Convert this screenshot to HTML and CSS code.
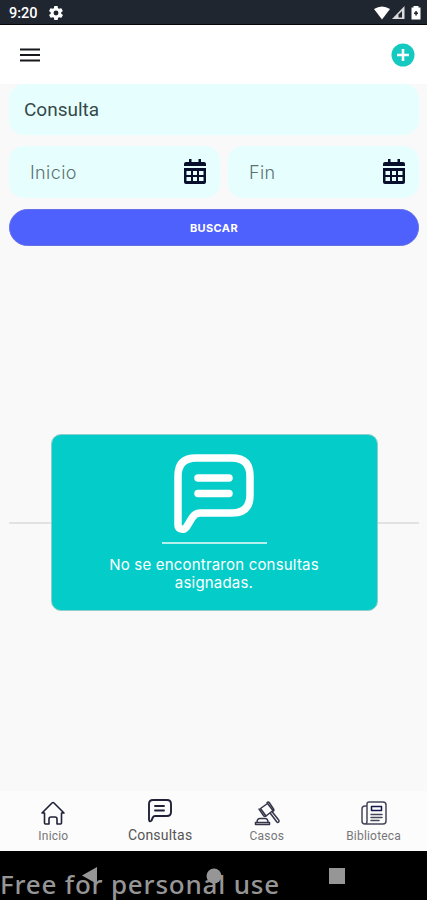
FILE: index.html
```html
<!DOCTYPE html>
<html lang="es">
<head>
  <meta charset="utf-8">
  <title>Consultas</title>
  <link rel="stylesheet" href="styles.css">
</head>
<body>

  <div class="status-bar">
    <span class="clock">9:20</span>
    <svg class="gear" width="14" height="14" viewBox="2 2 20 20"><path fill="#fff" d="M19.4 13c0-.3.1-.6.1-1s0-.7-.1-1l2.100-1.600c.2-.2.2-.4.1-.6l-2-3.500c-.1-.2-.4-.3-.6-.2l-2.500 1c-.5-.4-1.100-.7-1.700-1l-.4-2.600c0-.3-.2-.5-.5-.5h-4c-.2 0-.5.2-.5.4l-.4 2.700c-.6.2-1.100.6-1.700 1l-2.500-1c-.2-.1-.5 0-.6.2l-2 3.500c-.1.2-.1.5.1.6L4.500 11c0 .3-.1.600-.1 1s0 .7.100 1l-2.100 1.600c-.2.200-.2.400-.1.600l2 3.500c.1.200.4.300.6.200l2.500-1c.5.400 1.100.7 1.700 1l.4 2.600c0 .3.200.500.5.500h4c.2 0 .5-.2.5-.4l.4-2.700c.6-.2 1.100-.6 1.700-1l2.500 1c.2.100.5 0 .6-.2l2-3.500c.1-.2.1-.5-.1-.6zM12 15.500a3.500 3.500 0 1 1 0-7 3.500 3.500 0 0 1 0 7z"/></svg>
    <svg class="signals" width="50" height="16" viewBox="0 0 50 16">
      <path d="M1 4Q9 -1 17 4L9 14.500z" fill="#fff"/>
      <path d="M19 14L31.500 1V14z" fill="#d9dbdd"/>
      <path d="M25.500 12.500V9.500L29 6v6.500z" fill="#202630"/>
      <path d="M40.500 1h5v1.500h2V14.500h-9V2.500h2z" fill="#fff"/>
      <path d="M42.300 6h1.500v1.500h1.200V9h-1.200v1.500h-1.500V9h-1.300V7.500h1.300z" fill="#202630"/>
    </svg>
  </div>

  <div class="header">
    <svg width="20" height="14" viewBox="0 0 20 14"><path d="M0 1.500h20M0 7h20M0 12.500h20" stroke="#16181c" stroke-width="1.800"/></svg>
    <svg width="24" height="24" viewBox="0 0 24 24"><circle cx="12" cy="12" r="11.500" fill="#13c9c0"/><path d="M12 6v12M6 12h12" stroke="#fff" stroke-width="2.600"/></svg>
  </div>

  <div class="content">
    <div class="field query">Consulta</div>
    <div class="dates">
      <div class="field date">
        <span>Inicio</span>
        <svg width="22" height="25" viewBox="0 0 22 25"><path fill="#080e2c" d="M5 0h2.500v3h7V0H17v3h3q2 0 2 2v2H0V5q0-2 2-2h3zM0 9h22v14q0 2-2 2H2q-2 0-2-2z"/><path fill="#e6fffe" d="M2.500 12h4.500v4H2.500zM9 12h4v4H9zM15 12h4.500v4h-4.500zM2.500 18h4.500v4H2.500zM9 18h4v4H9zM15 18h4.500v4h-4.500z"/></svg>
      </div>
      <div class="field date">
        <span>Fin</span>
        <svg width="22" height="25" viewBox="0 0 22 25"><path fill="#080e2c" d="M5 0h2.500v3h7V0H17v3h3q2 0 2 2v2H0V5q0-2 2-2h3zM0 9h22v14q0 2-2 2H2q-2 0-2-2z"/><path fill="#e6fffe" d="M2.500 12h4.500v4H2.500zM9 12h4v4H9zM15 12h4.500v4h-4.500zM2.500 18h4.500v4H2.500zM9 18h4v4H9zM15 18h4.500v4h-4.500z"/></svg>
      </div>
    </div>
    <button class="search-btn">BUSCAR</button>

    <div class="results">
      <div class="side-line"></div>
      <div class="empty-card">
        <svg width="80" height="80" viewBox="0 0 80 80" fill="none" stroke="#fff" stroke-width="7.500" stroke-linecap="round" stroke-linejoin="round">
          <path d="M4 22Q4 4 22 4H58Q76 4 76 22V41Q76 59 58 59H26Q21 59 18 64L12.500 73Q10 76 7 75Q4 74 4 71Z"/>
          <path d="M24 24H55M24 39.500H55"/>
        </svg>
        <div class="divider"></div>
        <p>No se encontraron consultas<br>asignadas.</p>
      </div>
      <div class="side-line"></div>
    </div>
  </div>

  <div class="tabs">
    <div class="tab">
      <svg width="26" height="26" viewBox="0 0 26 26" fill="none" stroke="#202138" stroke-width="1.600" stroke-linejoin="round" stroke-linecap="round"><path d="M2 13L12 3q1-1 2 0l10 10H21.500V23q0 1-1 1H17V19q0-2-2-2h-4q-2 0-2 2v5H5.500q-1 0-1-1V13z"/></svg>
      <span>Inicio</span>
    </div>
    <div class="tab active">
      <svg width="26" height="26" viewBox="0 0 26 26" fill="none" stroke="#202138" stroke-width="1.900" stroke-linejoin="round" stroke-linecap="round"><path d="M2 6q0-4 4-4h14q4 0 4 4v8q0 4-4 4H8q-1.500 0-2.200 1.500L4.500 22.500Q2 24.500 2 21z"/><path d="M8 8h9M8 12.500h9"/></svg>
      <span>Consultas</span>
    </div>
    <div class="tab">
      <svg width="26" height="26" viewBox="0 0 26 26" fill="none" stroke="#34354a" stroke-width="1.500" stroke-linejoin="round" stroke-linecap="round"><path d="M6.500 8.500L13.500 3.500L19 10.500L12 16z"/><path d="M5 9l4.500 6.500q1 1.500 2.500.5M13 2.500q1.500-1 2.500.5l4 6q1 1.500-.5 2.300M16.500 13.500l6 8q1 1.800 2 .6 1.200-1.100-.2-2.600l-6-7.500"/><path d="M1.500 24.500v-2h14v2zM3 22.500q0-4 3-4h5q3 0 3 4"/></svg>
      <span>Casos</span>
    </div>
    <div class="tab">
      <svg width="26" height="26" viewBox="0 0 26 26" fill="none" stroke="#45465a" stroke-width="1.500" stroke-linejoin="round" stroke-linecap="round"><path d="M6 21V4q0-2 2-2h14q3 0 3 3v16q0 3-3 3H4q-3 0-3-3V9q0-3 3-3h2M6 21q0 3-2 3"/><path d="M10 14.500h11M10 17.500h11M10 20.500h8"/><path d="M10.500 6.500h10v4h-10z" stroke="#15174d"/></svg>
      <span>Biblioteca</span>
    </div>
  </div>

  <div class="nav-bar">
    <svg width="427" height="49" viewBox="0 0 427 49"><path d="M82 24.500L97 16v17z" fill="#969696"/><circle cx="214" cy="25" r="7.500" fill="#969696"/><path d="M329 17h16v16h-16z" fill="#969696"/></svg>
    <span class="watermark">Free for personal use</span>
  </div>

</body>
</html>
```
FILE: styles.css
```css
* {
  box-sizing: border-box;
}

body {
  margin: 0;
  height: 900px;
  display: flex;
  flex-direction: column;
  background-color: #f9f9f9;
  font-family: Roboto, sans-serif;
  overflow: hidden;
}

svg {
  display: block;
  flex-shrink: 0;
}

.status-bar {
  height: 25px;
  display: flex;
  align-items: center;
  padding: 2px 4px 0 9px;
  background-color: #202630;
  border-bottom: 1px solid #05070a;
  color: white;
}

.clock {
  font-size: 14.5px;
  font-weight: 500;
  width: 40px;
}

.signals {
  margin-left: auto;
}

.header {
  height: 59px;
  display: flex;
  align-items: center;
  justify-content: space-between;
  padding: 0 12px 0 20px;
  background-color: white;
}

.content {
  flex: 1;
  display: flex;
  flex-direction: column;
  padding: 0 8px 0 9px;
}

.field {
  display: flex;
  align-items: center;
  background-color: #e6fffe;
  border-radius: 15px;
}

.query {
  height: 51px;
  padding-left: 15px;
  color: #35494a;
  font-size: 19px;
}

.dates {
  display: grid;
  grid-template-columns: 211px 191px;
  gap: 8px;
  margin-top: 11px;
}

.date {
  height: 52px;
  justify-content: space-between;
  padding: 0 14px 0 21px;
  color: #5c7071;
  font-family: Inter, sans-serif;
  font-size: 18px;
  font-weight: 300;
  letter-spacing: 0.4px;
}

.date svg {
  margin-top: -2px;
}

.search-btn {
  height: 37px;
  margin-top: 11px;
  border: 1px solid #6570e8;
  border-radius: 19px;
  background-color: #4f61fd;
  color: white;
  font-family: Inter, sans-serif;
  font-size: 11px;
  font-weight: 700;
  letter-spacing: 0.4px;
}

.results {
  flex: 1;
  display: flex;
  align-items: center;
  padding-top: 8px;
}

.side-line {
  flex: 1;
  height: 2px;
  background-color: #e2e2e2;
}

.empty-card {
  width: 327px;
  height: 177px;
  display: flex;
  flex-direction: column;
  align-items: center;
  padding-top: 19px;
  border: 1px solid #8fcfcb;
  border-radius: 10px;
  background-color: #04ccc8;
  color: white;
}

.divider {
  width: 105px;
  height: 2px;
  margin-top: 8px;
  background-color: #b6f0ed;
}

.empty-card p {
  margin: 12px 0 0;
  font-family: Inter, sans-serif;
  font-size: 15px;
  line-height: 18px;
  letter-spacing: 0.2px;
  text-align: center;
}

.tabs {
  height: 60px;
  display: grid;
  grid-template-columns: repeat(4, 1fr);
  background-color: #fcfcfc;
}

.tab {
  display: flex;
  flex-direction: column;
  align-items: center;
  padding-top: 9px;
  color: #777;
  font-size: 12px;
  letter-spacing: 0.2px;
}

.tab span {
  margin-top: 3px;
}

.tab.active {
  padding-top: 7px;
  color: #555;
  font-size: 14px;
}

.nav-bar {
  height: 49px;
  position: relative;
  background-color: black;
}

.watermark {
  position: absolute;
  left: 0;
  top: 17px;
  color: #969696;
  font-family: "Noto Sans", sans-serif;
  font-size: 26px;
  font-weight: 500;
  line-height: 32px;
  letter-spacing: 0.8px;
  white-space: nowrap;
}
```
